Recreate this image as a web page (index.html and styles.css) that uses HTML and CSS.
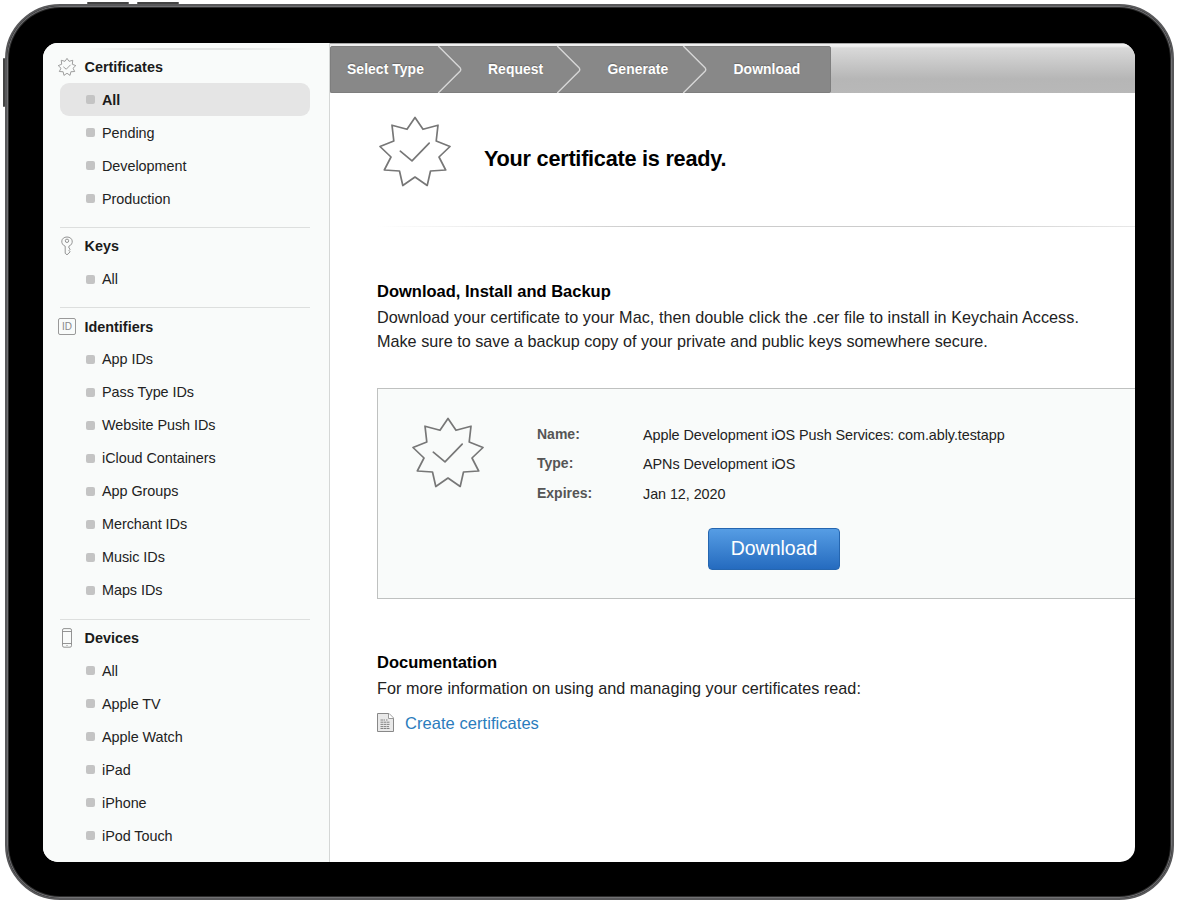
FILE: index.html
```html
<!DOCTYPE html>
<html lang="en">
<head>
<meta charset="utf-8">
<title>Certificates</title>
<link rel="stylesheet" href="styles.css">
</head>
<body>
<svg class="defs" width="0" height="0" aria-hidden="true">
  <symbol id="badge" viewBox="0 0 72 72">
    <path d="M36 1.5L44 13.3L59 9.2L57.2 25L71 30.5L60 41L66.7 54L51.5 55L48.2 69.5L36 61L23.8 69.5L20.5 55L5.300 54L12 41L1 30.5L14.800 25L13 9.200L28 13.300Z"/>
    <path d="M21.300 35.200L33 44.800L50.200 27.200"/>
  </symbol>
</svg>
<div class="device">
  <i class="key key-top-a"></i><i class="key key-top-b"></i><i class="key key-left"></i>
  <div class="screen">
    <nav class="sidebar">
      <section class="group">
        <h2 class="group-title"><svg class="icon icon-badge"><use href="#badge"/></svg>Certificates</h2>
        <ul class="list">
          <li class="item active">All</li>
          <li class="item">Pending</li>
          <li class="item">Development</li>
          <li class="item">Production</li>
        </ul>
      </section>
      <section class="group">
        <h2 class="group-title"><svg class="icon" viewBox="0 0 18 20"><circle cx="9" cy="4.800" r="1.700"/><path d="M7.200 10.200C2 8.200 2.800 1 9 1S16 8.200 10.900 10.200V12L12.200 13.200L11 14.500L12.100 15.800L11 17L9 18.800L7.200 17.300Z"/></svg>Keys</h2>
        <ul class="list">
          <li class="item">All</li>
        </ul>
      </section>
      <section class="group">
        <h2 class="group-title"><span class="icon-id">ID</span>Identifiers</h2>
        <ul class="list">
          <li class="item">App IDs</li>
          <li class="item">Pass Type IDs</li>
          <li class="item">Website Push IDs</li>
          <li class="item">iCloud Containers</li>
          <li class="item">App Groups</li>
          <li class="item">Merchant IDs</li>
          <li class="item">Music IDs</li>
          <li class="item">Maps IDs</li>
        </ul>
      </section>
      <section class="group">
        <h2 class="group-title"><svg class="icon" viewBox="0 0 18 20"><rect x="4.500" y=".6" width="9" height="18.600" rx="1.500"/><path d="M4.500 3.500H13.500M4.500 15.500H13.500M9 17V18"/></svg>Devices</h2>
        <ul class="list">
          <li class="item">All</li>
          <li class="item">Apple TV</li>
          <li class="item">Apple Watch</li>
          <li class="item">iPad</li>
          <li class="item">iPhone</li>
          <li class="item">iPod Touch</li>
        </ul>
      </section>
    </nav>
    <main class="main">
      <header class="steps-bar">
        <ol class="steps">
          <li class="step step-1"><span>Select Type</span><svg class="chevron" viewBox="0 0 25 48"><path d="M1 0L23.500 22.500Q24.500 24 23.500 25.500L1 48"/></svg></li>
          <li class="step step-2"><span>Request</span><svg class="chevron" viewBox="0 0 25 48"><path d="M1 0L23.500 22.500Q24.500 24 23.500 25.500L1 48"/></svg></li>
          <li class="step step-3"><span>Generate</span><svg class="chevron" viewBox="0 0 25 48"><path d="M1 0L23.500 22.500Q24.500 24 23.500 25.500L1 48"/></svg></li>
          <li class="step step-4"><span>Download</span></li>
        </ol>
      </header>
      <div class="content">
        <div class="hero">
          <svg class="badge"><use href="#badge"/></svg>
          <h1 class="hero-title">Your certificate is ready.</h1>
        </div>
        <div class="rule"></div>
        <h3 class="heading">Download, Install and Backup</h3>
        <p class="text"><span class="line-a">Download your certificate to your Mac, then double click the .cer file to install in Keychain Access.</span><br><span class="line-b">Make sure to save a backup copy of your private and public keys somewhere secure.</span></p>
        <div class="card">
          <svg class="badge"><use href="#badge"/></svg>
          <div class="details">
            <dl class="facts">
              <dt>Name:</dt><dd><span class="name">Apple Development iOS Push Services: com.ably.testapp</span></dd>
              <dt>Type:</dt><dd>APNs Development iOS</dd>
              <dt>Expires:</dt><dd>Jan 12, 2020</dd>
            </dl>
            <button class="download">Download</button>
          </div>
        </div>
        <h3 class="heading">Documentation</h3>
        <p class="text line-c">For more information on using and managing your certificates read:</p>
        <a class="doc-link"><svg class="doc-icon" viewBox="0 0 18 20"><path class="page" d="M.5 .5H12L16.500 5V18.500H.5Z"/><path class="fold" d="M11.500 .5V5.500H16.500"/><path class="rows" d="M3.500 7H8M9 7H10.500M3.500 9.200H13M3.500 11.400H13M3.500 13.600H12M3.500 15.500H13"/></svg><span>Create certificates</span></a>
      </div>
    </main>
  </div>
</div>
</body>
</html>
```

FILE: styles.css
```css
* { box-sizing: border-box; }
html, body { height: 100%; }
body {
  margin: 0;
  padding: 4px 3px 4px 5px;
  background: #fff;
  color: #222;
  font-family: "Liberation Sans", Arial, sans-serif;
  overflow: hidden;
}
h1, h2, h3, p, ul, ol, dl, dd { margin: 0; padding: 0; }
ul, ol { list-style: none; }
.defs { position: absolute; }

.device {
  position: relative;
  height: 896px;
  padding: 37px 37px 38px 36px;
  border: 2px solid #58585a;
  border-radius: 55px;
  background: #000;
  box-shadow: inset 0 0 0 1px #707073, inset 0 0 0 2px #2c2c2c;
}
.key { position: absolute; background: #444; border-radius: 1px; }
.key-top-a { left: 80px; top: -4px; width: 42px; height: 2px; }
.key-top-b { left: 130px; top: -4px; width: 42px; height: 2px; }
.key-left { left: -4px; top: 52px; width: 2px; height: 49px; }

.screen {
  display: flex;
  height: 818.500px;
  border-radius: 15px;
  overflow: hidden;
  background: #fff;
}

.sidebar {
  flex: 0 0 287px;
  padding: 5px 19.500px 0 16.500px;
  background: #f9fbfa;
  border-right: 1px solid #d5d7d6;
}
.sidebar::before {
  content: "";
  display: block;
  height: 2px;
  margin-left: 20px;
  background: linear-gradient(90deg, transparent, #e2e4e3 35%, #e2e4e3 65%, transparent);
}
.group { padding-bottom: 12px; }
.group + .group { border-top: 1px solid #dddfde; padding-top: 1.300px; }
.group-title {
  display: flex;
  align-items: center;
  height: 33px;
  padding-top: 1px;
  color: #1b1b1b;
  font-size: 14.400px;
  font-weight: bold;
}
.icon, .icon-id { flex: none; width: 18px; margin: 0 8.500px 0 -1.500px; }
.icon { height: 20px; fill: none; stroke: #888; stroke-width: .9; }
.icon-badge { stroke-width: 3.200; }
.icon-id {
  height: 17px;
  border: 1px solid #999;
  border-radius: 2px;
  color: #888;
  font: 10px/15px "Liberation Sans", Arial, sans-serif;
  text-align: center;
}
.item {
  display: flex;
  align-items: center;
  gap: 7.500px;
  height: 33px;
  padding: .5px 0 0 26px;
  font-size: 14.400px;
  letter-spacing: -.04px;
}
.item::before { content: ""; width: 9px; height: 9px; border-radius: 2px; background: #c4c4c4; }
.active { background: #e5e5e5; border-radius: 9px; font-weight: bold; color: #1b1b1b; }

.main { flex: 1; min-width: 0; }
.steps-bar {
  height: 50px;
  padding-top: 2px;
  border-top: 1px solid #aaa;
  background: linear-gradient(#f0f0f0 2px, #d9d9d9 4px, #b6b6b6 35px, #b8b8b8);
}
.steps { display: flex; width: 501px; height: 47px; background: #888; border: 1px solid #7e7e7e; border-radius: 2px; }
.step { display: flex; align-items: center; justify-content: space-between; color: #fff; font-size: 13.900px; font-weight: bold; letter-spacing: .07px; text-shadow: 0 -1px 1px #666; }
.step span { padding-bottom: 1px; }
.step-1 { width: 131px; padding-left: 16px; }
.step-2 { width: 119px; padding-left: 26px; }
.step-3 { width: 126px; padding-left: 26.500px; }
.step-4 { padding-left: 26.500px; }
.chevron { width: 25px; height: 47px; fill: none; stroke: #d5d5d5; stroke-width: 1.400; }

.content { padding: 22px 0 0 47px; }
.badge { flex: none; width: 72px; height: 72px; fill: none; stroke: #777; stroke-width: 1.700; stroke-linejoin: round; stroke-linecap: round; }
.hero { display: flex; align-items: center; gap: 33px; height: 74px; padding-left: 2px; }
.hero-title { padding-top: 14px; color: #000; font-size: 21.700px; line-height: 28px; letter-spacing: -.25px; }
.rule { height: 1px; margin: 37px 0 54px; background: linear-gradient(90deg, transparent, #ccc 35%, #ccc 75%, #e8e8e8); }
.heading { color: #000; font-size: 16.500px; line-height: 20px; }
.text { padding-top: 4px; color: #222; font-size: 16.200px; line-height: 24px; white-space: nowrap; }
.line-a { letter-spacing: .055px; }
.line-b { letter-spacing: .01px; }
.line-c { letter-spacing: .025px; }

.card {
  display: flex;
  gap: 53px;
  height: 211px;
  margin: 35px 0 53px;
  padding: 28px 0 0 34px;
  border: 1px solid #bfc1c0;
  border-right: 0;
  background: #f9fbfa;
}
.facts { display: grid; grid-template-columns: 106px auto; grid-auto-rows: 29.500px; align-items: center; padding-top: 3px; white-space: nowrap; }
.facts dt { padding-bottom: 2px; color: #555; font-size: 14px; font-weight: bold; }
.facts dd { color: #222; font-size: 14.400px; letter-spacing: -.07px; }
.download {
  display: block;
  width: 132px;
  height: 42px;
  margin: 19px 0 0 171px;
  padding: 0 0 1px;
  border: 1px solid #2566b0;
  border-radius: 4px;
  background: linear-gradient(#569de4, #256bbf);
  color: #fff;
  font: 19.500px "Liberation Sans", Arial, sans-serif;
}
.doc-link { display: flex; align-items: center; gap: 10px; height: 22px; margin-top: 12px; color: #2a7cbd; font-size: 16.500px; letter-spacing: .05px; }
.doc-icon { width: 18px; height: 20px; }
.page { fill: #e9e9e9; stroke: #888; }
.fold { fill: #fff; stroke: #999; }
.rows { fill: none; stroke: #777; stroke-width: .9; stroke-dasharray: 2.500 .5; }
```
